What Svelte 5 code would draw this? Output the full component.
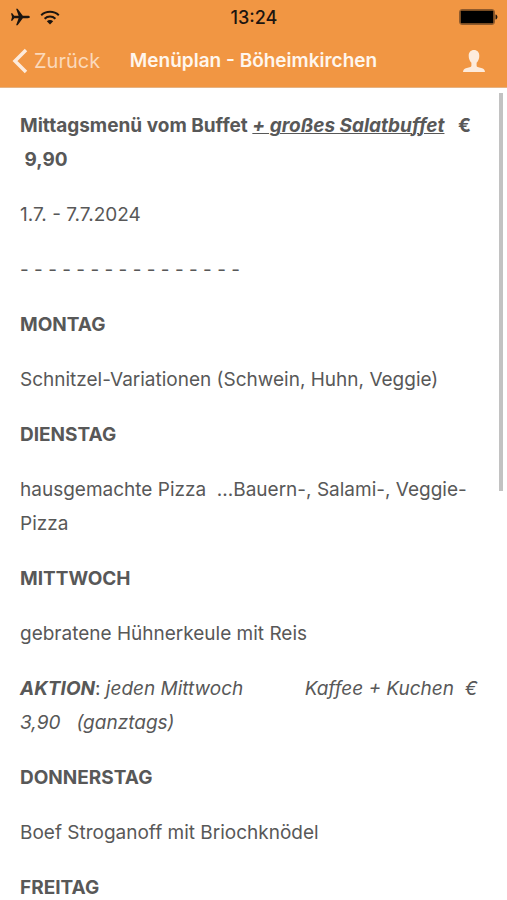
<script>
    const menu = [
        { day: 'MONTAG', meal: 'Schnitzel-Variationen (Schwein, Huhn, Veggie)' },
        { day: 'DIENSTAG', meal: 'hausgemachte Pizza \u00a0...Bauern-, Salami-, Veggie-Pizza' },
        { day: 'MITTWOCH', meal: 'gebratene Hühnerkeule mit Reis', special: true },
        { day: 'DONNERSTAG', meal: 'Boef Stroganoff mit Briochknödel' },
        { day: 'FREITAG' }
    ];
</script>

<div class="app">
    <header>
        <div class="status">
            <div class="signals">
                <svg width="20" height="18" viewBox="0 0 20 18" aria-label="Flugmodus">
                    <path d="M19.800 9c0-.8-.8-1.200-1.800-1.200h-5.200L7.600.8H6.100l2.500 7H4.200L2.300 5.300H1L2 9l-1 3.700h1.300l1.900-2.500h4.400l-2.500 7h1.500l5.200-7H18c1 0 1.800-.4 1.800-1.200z" fill="#1c1510" />
                </svg>
                <svg width="20" height="15" viewBox="0 0 20 15" aria-label="WLAN">
                    <path d="M1.200 5.200C6 .6 14 .6 18.800 5.200M4.600 8.700c3.100-2.900 7.700-2.900 10.800 0" fill="none" stroke="#1c1510" stroke-width="2" />
                    <path d="M10 14.500l-3.200-3.200c1.800-1.700 4.600-1.700 6.400 0z" fill="#1c1510" />
                </svg>
            </div>
            <span class="time">13:24</span>
            <svg class="battery" width="39" height="16" viewBox="0 0 39 16" aria-label="Akku">
                <rect x=".5" y=".5" width="35" height="15" rx="2.500" fill="none" stroke="#8f5a2c" />
                <rect x="1.500" y="1.500" width="33" height="13" rx="1" fill="#000000" />
                <path d="M36.500 5.500c2.600.4 2.600 4.600 0 5z" fill="#1c1510" />
            </svg>
        </div>
        <nav>
            <button class="back">
                <svg width="16" height="26" viewBox="0 0 16 26" aria-hidden="true">
                    <path d="M14 2L3 13l11 11" fill="none" stroke="#fdebdc" stroke-width="3.500" />
                </svg>
                Zurück
            </button>
            <h1>Menüplan - Böheimkirchen</h1>
            <button class="profile" aria-label="Profil">
                <svg width="22" height="22" viewBox="0 0 22 22" aria-hidden="true">
                    <path d="M11 0c3.300 0 5.300 2.200 5.300 5.800 0 3-1.100 5.600-2.700 7v2.600c0 1 .6 1.500 1.800 1.800l3.700 1.100c1.700.5 2.600 1.300 2.900 3.700H0c.3-2.400 1.200-3.200 2.900-3.700l3.700-1.100c1.200-.3 1.800-.8 1.800-1.800v-2.600c-1.600-1.400-2.700-4-2.700-7C5.700 2.200 7.700 0 11 0z" fill="#fdebdc" />
                </svg>
            </button>
        </nav>
    </header>

    <main>
        <p><strong>Mittagsmenü vom Buffet <em class="salad">+ großes Salatbuffet</em> &nbsp; € &nbsp;9,90</strong></p>
        <p>1.7. - 7.7.2024</p>
        <p>- - - - - - - - - - - - - - - -</p>
        {#each menu as item}
            <p><strong>{item.day}</strong></p>
            {#if item.meal}
                <p>{item.meal}</p>
            {/if}
            {#if item.special}
                <p><strong><em>AKTION</em></strong>: <em>jeden Mittwoch <span class="gap"></span>Kaffee + Kuchen &nbsp;€ 3,90 &nbsp; (ganztags)</em></p>
            {/if}
        {/each}
        <div class="scrollbar"></div>
    </main>
</div>

<style>
    :global(body) {
        margin: 0;
        background: #ffffff;
    }

    .app {
        height: 100vh;
        display: flex;
        flex-direction: column;
        overflow: hidden;
        font-family: Inter, "Liberation Sans", sans-serif;
    }

    header {
        flex: none;
        background: #f19643;
        border-bottom: 1px solid #e5b384;
    }

    .status {
        display: grid;
        grid-template-columns: 1fr auto 1fr;
        align-items: center;
        height: 34px;
        padding: 0 9px 0 10px;
    }

    .signals {
        display: flex;
        align-items: center;
        gap: 10px;
    }

    .time {
        font-size: 18px;
        font-weight: 500;
        color: #1c1510;
    }

    .battery {
        justify-self: end;
    }

    nav {
        display: grid;
        grid-template-columns: 1fr auto 1fr;
        align-items: center;
        height: 53px;
        padding: 0 12px;
    }

    button {
        display: flex;
        align-items: center;
        padding: 0;
        border: none;
        background: transparent;
        font-family: inherit;
        font-size: 20px;
        color: #fbd9bb;
    }

    .back {
        gap: 6px;
    }

    .profile {
        justify-self: end;
        padding-right: 10px;
    }

    h1 {
        margin: 0;
        font-size: 19px;
        font-weight: 600;
        color: #fff6ee;
        white-space: nowrap;
    }

    main {
        flex: 1;
        min-height: 0;
        position: relative;
        padding: 21px 20px 0;
        color: #585858;
    }

    p {
        margin: 0 0 21px;
        font-size: 19px;
        line-height: 34px;
    }

    strong {
        font-weight: 700;
    }

    .salad {
        text-decoration: underline;
        text-decoration-thickness: 1px;
    }

    .gap {
        display: inline-block;
        width: 56px;
    }

    .scrollbar {
        position: absolute;
        top: 5px;
        right: 4px;
        width: 4px;
        height: 49%;
        background: #c2c2c2;
    }
</style>
